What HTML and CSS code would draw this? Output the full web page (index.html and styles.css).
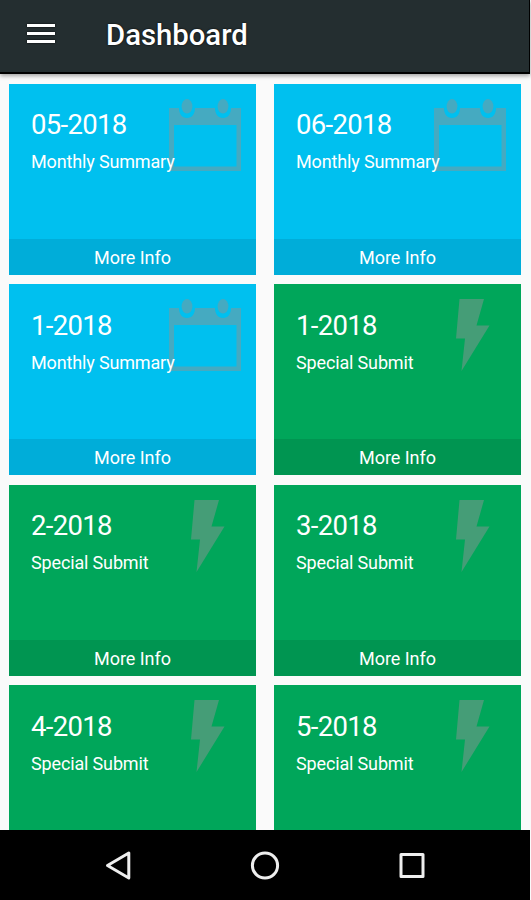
FILE: index.html
```
<!DOCTYPE html>
<html lang="en">
<head>
  <meta charset="UTF-8" />
  <meta name="viewport" content="width=device-width, initial-scale=1.0" />
  <title>Dashboard</title>
  <link rel="stylesheet" href="styles.css">
</head>
<body>
  <!-- Shared icons -->
  <svg class="icon-defs" width="0" height="0">
    <symbol id="calendar" viewBox="0 0 72 72">
      <path fill-rule="evenodd" d="M0 9H10C10 15 13 19 18 19S26 15 26 9H46C46 15 49 19 54 19S62 15 62 9H72V72H0ZM5 26V67.5H67.5V26Z" />
      <ellipse cx="18" cy="7.3" rx="5.4" ry="7.3" />
      <ellipse cx="54" cy="7.3" rx="5.4" ry="7.3" />
    </symbol>
    <symbol id="bolt" viewBox="0 0 72 72">
      <path d="M25.500 0H50L42.500 26.500H55.500L27.500 72L31 39.500H22Z" />
    </symbol>
  </svg>

  <header class="toolbar">
    <button class="menu-btn" aria-label="Menu"><span></span><span></span><span></span></button>
    <h1>Dashboard</h1>
  </header>

  <main class="cards">
    <section class="card monthly">
      <svg class="card-icon"><use href="#calendar" /></svg>
      <div class="card-body"><h2>05-2018</h2><p>Monthly Summary</p></div>
      <a class="more">More Info</a>
    </section>
    <section class="card monthly">
      <svg class="card-icon"><use href="#calendar" /></svg>
      <div class="card-body"><h2>06-2018</h2><p>Monthly Summary</p></div>
      <a class="more">More Info</a>
    </section>
    <section class="card monthly">
      <svg class="card-icon"><use href="#calendar" /></svg>
      <div class="card-body"><h2>1-2018</h2><p>Monthly Summary</p></div>
      <a class="more">More Info</a>
    </section>
    <section class="card special">
      <svg class="card-icon"><use href="#bolt" /></svg>
      <div class="card-body"><h2>1-2018</h2><p>Special Submit</p></div>
      <a class="more">More Info</a>
    </section>
    <section class="card special">
      <svg class="card-icon"><use href="#bolt" /></svg>
      <div class="card-body"><h2>2-2018</h2><p>Special Submit</p></div>
      <a class="more">More Info</a>
    </section>
    <section class="card special">
      <svg class="card-icon"><use href="#bolt" /></svg>
      <div class="card-body"><h2>3-2018</h2><p>Special Submit</p></div>
      <a class="more">More Info</a>
    </section>
    <section class="card special">
      <svg class="card-icon"><use href="#bolt" /></svg>
      <div class="card-body"><h2>4-2018</h2><p>Special Submit</p></div>
    </section>
    <section class="card special">
      <svg class="card-icon"><use href="#bolt" /></svg>
      <div class="card-body"><h2>5-2018</h2><p>Special Submit</p></div>
    </section>
  </main>

  <nav class="navbar">
    <svg class="nav-icon" viewBox="0 0 32 32"><path d="M26.800 4V29L5.500 16.500Z" /></svg>
    <svg class="nav-icon" viewBox="0 0 32 32"><circle cx="16" cy="16.500" r="12.600" /></svg>
    <svg class="nav-icon" viewBox="0 0 32 32"><rect x="5" y="5.500" width="22" height="22" /></svg>
  </nav>
</body>
</html>
```
FILE: styles.css
```
:root {
  --toolbar: #242e30;
  --page: #fafafa;
  --blue: #00c0ef;
  --blue-dark: #00add9;
  --green: #00a65a;
  --green-dark: #009551;
}
* {
  box-sizing: border-box;
}
body {
  margin: 0;
  height: 900px;
  display: flex;
  flex-direction: column;
  overflow: hidden;
  background: var(--page);
  color: #fff;
  font-family: Roboto, sans-serif;
}
h1, h2, p {
  margin: 0;
}
.icon-defs {
  display: none;
}
.toolbar {
  flex: 0 0 74px;
  width: 530px;
  display: flex;
  align-items: center;
  gap: 51px;
  padding: 0 0 5px 27px;
  background: var(--toolbar);
  border-right: 1px solid #000;
  border-bottom: 2px solid #000;
  box-shadow: 0 2px 4px rgba(0, 0, 0, 0.35);
}
.toolbar h1 {
  padding-top: 3px;
  font-size: 29.3px;
  font-weight: 500;
  line-height: 36px;
  text-shadow: 0 0 2px #000;
}
.menu-btn {
  width: 28px;
  padding: 0;
  border: none;
  background: none;
  display: flex;
  flex-direction: column;
  gap: 5px;
}
.menu-btn span {
  height: 3px;
  background: #fff;
  box-shadow: 0 0 2px #000;
}
.cards {
  flex: 1;
  min-height: 0;
  overflow: hidden;
  display: grid;
  grid-template-columns: 247px 247px;
  grid-auto-rows: 191px;
  gap: 9.5px 18px;
  padding: 9.8px 9px 0;
}
.card {
  position: relative;
  display: flex;
  flex-direction: column;
}
.monthly {
  background: var(--blue);
}
.special {
  background: var(--green);
}
.card-body {
  position: relative;
  flex: 1;
  padding: 24.6px 0 0 22px;
}
.card-body h2 {
  font-size: 27.5px;
  font-weight: 400;
  line-height: 34px;
  letter-spacing: -0.7px;
}
.card-body p {
  margin-top: 9px;
  font-size: 18px;
  line-height: 22px;
  letter-spacing: -0.15px;
  white-space: nowrap;
}
.card-icon {
  position: absolute;
  top: 15px;
  right: 15px;
  width: 72px;
  height: 72px;
  fill: #8a9494;
  fill-opacity: 0.5;
}
.more {
  height: 36px;
  line-height: 38px;
  text-align: center;
  font-size: 18px;
  letter-spacing: -0.05px;
}
.monthly .more {
  background: var(--blue-dark);
}
.special .more {
  background: var(--green-dark);
}
.navbar {
  flex: 0 0 70px;
  width: 530px;
  display: flex;
  justify-content: center;
  align-items: center;
  gap: 115px;
  background: #000;
}
.nav-icon {
  width: 32px;
  height: 32px;
  fill: none;
  stroke: #eee;
  stroke-width: 3;
  stroke-linejoin: round;
}
```
